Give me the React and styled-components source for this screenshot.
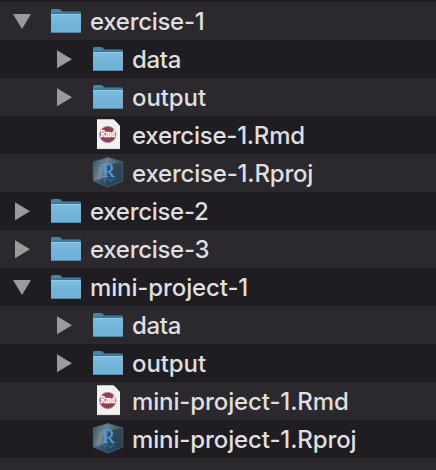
import React from "react";
import styled, { createGlobalStyle } from "styled-components";

const GlobalStyle = createGlobalStyle`
  html, body { margin: 0; padding: 0; background: #1f1d21; overflow: hidden; }
`;

const Window = styled.main`
  box-sizing: border-box;
  width: 436px;
  height: 470px;
  padding-top: 2px;
  overflow: hidden;
  background: #1f1d21;
  font-family: Inter, "Liberation Sans", sans-serif;
`;

const Row = styled.div`
  box-sizing: border-box;
  display: flex;
  align-items: flex-start;
  height: 38px;
  padding-left: ${(p) => 12 + p.$level * 42}px;
  background: #1f1d21;
  &:nth-child(odd) { background: #2b292e; }
`;

const Toggle = styled.span`
  display: block;
  width: 38px;
  height: 38px;
`;

const Icon = styled.span`
  display: block;
  width: 40px;
  height: 38px;
`;

const Drawing = styled.svg`
  display: block;
`;

const Label = styled.span`
  font-size: 24px;
  line-height: 40px;
  height: 38px;
  font-weight: 500;
  letter-spacing: ${(p) => p.$tracking}px;
  color: #dfdee0;
  white-space: nowrap;
  -webkit-font-smoothing: antialiased;
`;

const Disclosure = ({ open }) => (
  <Drawing width="38" height="38">
    <path d={open ? "M1 12H19L10 27Z" : "M3 10.3V28.2L18 19.2Z"} fill="#9b9a9c" />
  </Drawing>
);

const Folder = () => (
  <Drawing width="40" height="38">
    <defs>
      <linearGradient id="folderFront" x2="0" y2="1">
        <stop offset="0" stopColor="#7dbde0" />
        <stop offset=".55" stopColor="#72b2d7" />
        <stop offset="1" stopColor="#6fb2d8" />
      </linearGradient>
    </defs>
    <path d="M1 30V8.6Q1 7 2.6 7H9Q10 7 10.7 7.8L12.4 9.6H29.6Q31 9.6 31 11V30Z" fill="#4c819f" />
    <path d="M2 11.2H31" stroke="#3b6c89" strokeWidth="1" />
    <path d="M1 12H31V29.8Q31 31 29.7 31H2.3Q1 31 1 29.8Z" fill="url(#folderFront)" />
    <path d="M1.3 12.5H30.7" stroke="#92cbe8" strokeWidth="1" />
    <path d="M1.5 30.5H30.5" stroke="#4e8aac" strokeWidth="1" />
  </Drawing>
);

const RmdFile = () => (
  <Drawing width="40" height="38">
    <path d="M5 3.2H21.5L28 10V33H5Z" fill="#f2f1f2" />
    <path d="M21.5 3.2V10H28Z" fill="#d3d2d4" />
    <path d="M22 4.3V9.5H27Z" fill="#fafafa" />
    <path d="M5 32.7H28" stroke="#c5c4c6" strokeWidth=".6" />
    <circle cx="15.8" cy="18.5" r="8.1" fill="#963b5c" stroke="#a57788" strokeWidth=".8" />
    <text x="15.8" y="21.3" textAnchor="middle" textLength="14.6" lengthAdjust="spacingAndGlyphs"
      fontFamily="Liberation Serif, serif" fontWeight="700" fontSize="9.6" fill="#fff" stroke="#fff" strokeWidth=".5">Rmd</text>
  </Drawing>
);

const RProject = () => (
  <Drawing width="40" height="38">
    <defs>
      <linearGradient id="cubeLeft" x1="0" y1=".3" x2="1" y2=".8">
        <stop offset="0" stopColor="#406070" />
        <stop offset=".45" stopColor="#7d8c94" />
        <stop offset="1" stopColor="#28475b" />
      </linearGradient>
      <linearGradient id="cubeRight" x1="0" y1="0" x2="1" y2="1">
        <stop offset="0" stopColor="#43545f" />
        <stop offset="1" stopColor="#243c51" />
      </linearGradient>
      <linearGradient id="cubeTop" x2="1" y2="0">
        <stop offset="0" stopColor="#48616f" />
        <stop offset=".45" stopColor="#73828a" />
        <stop offset="1" stopColor="#354e5e" />
      </linearGradient>
    </defs>
    <path d="M1.3 8L16 3.5L30.7 8V27L16 33L1.3 27Z" fill="url(#cubeRight)" />
    <path d="M1.3 8L16 11V33L1.3 27Z" fill="url(#cubeLeft)" />
    <path d="M1.3 8L16 3.5L30.7 8L16 11Z" fill="url(#cubeTop)" />
    <path d="M1.3 27L16 23L30.7 27L16 33Z" fill="#27475b" fillOpacity=".7" />
    <path d="M1.3 8L16 3.5L30.7 8V27L16 33L1.3 27Z" fill="none" stroke="#40687c" strokeWidth=".8" />
    <text x="16.7" y="22.9" textAnchor="middle" fontFamily="Liberation Serif, serif" fontSize="19.5" fill="#4b9de0" stroke="#4b9de0" strokeWidth=".4" textLength="12.4" lengthAdjust="spacingAndGlyphs">R</text>
    <path d="M10.8 25.3H14.8M12.8 25.3V28.5M16 25.3L20 28M19 25.3H22.4" stroke="#37719b" strokeWidth="1.1" fill="none" />
  </Drawing>
);

const icons = { folder: Folder, rmd: RmdFile, rproj: RProject };

const entries = [
  { name: "exercise-1", level: 0, kind: "folder", open: true },
  { name: "data", level: 1, kind: "folder" },
  { name: "output", level: 1, kind: "folder", tracking: -0.1 },
  { name: "exercise-1.Rmd", level: 1, kind: "rmd", tracking: -0.25 },
  { name: "exercise-1.Rproj", level: 1, kind: "rproj", tracking: -0.2 },
  { name: "exercise-2", level: 0, kind: "folder" },
  { name: "exercise-3", level: 0, kind: "folder" },
  { name: "mini-project-1", level: 0, kind: "folder", open: true, tracking: -0.12 },
  { name: "data", level: 1, kind: "folder" },
  { name: "output", level: 1, kind: "folder", tracking: -0.1 },
  { name: "mini-project-1.Rmd", level: 1, kind: "rmd", tracking: -0.12 },
  { name: "mini-project-1.Rproj", level: 1, kind: "rproj", tracking: -0.12 },
];

export default function App() {
  return (
    <>
      <GlobalStyle />
      <Window>
        {entries.map(({ name, level, kind, open, tracking = -0.3 }, index) => {
          const Glyph = icons[kind];
          return (
            <Row key={index} $level={level}>
              <Toggle>{kind === "folder" && <Disclosure open={open} />}</Toggle>
              <Icon><Glyph /></Icon>
              <Label $tracking={tracking}>{name}</Label>
            </Row>
          );
        })}
        <Row $level={0} />
      </Window>
    </>
  );
}
